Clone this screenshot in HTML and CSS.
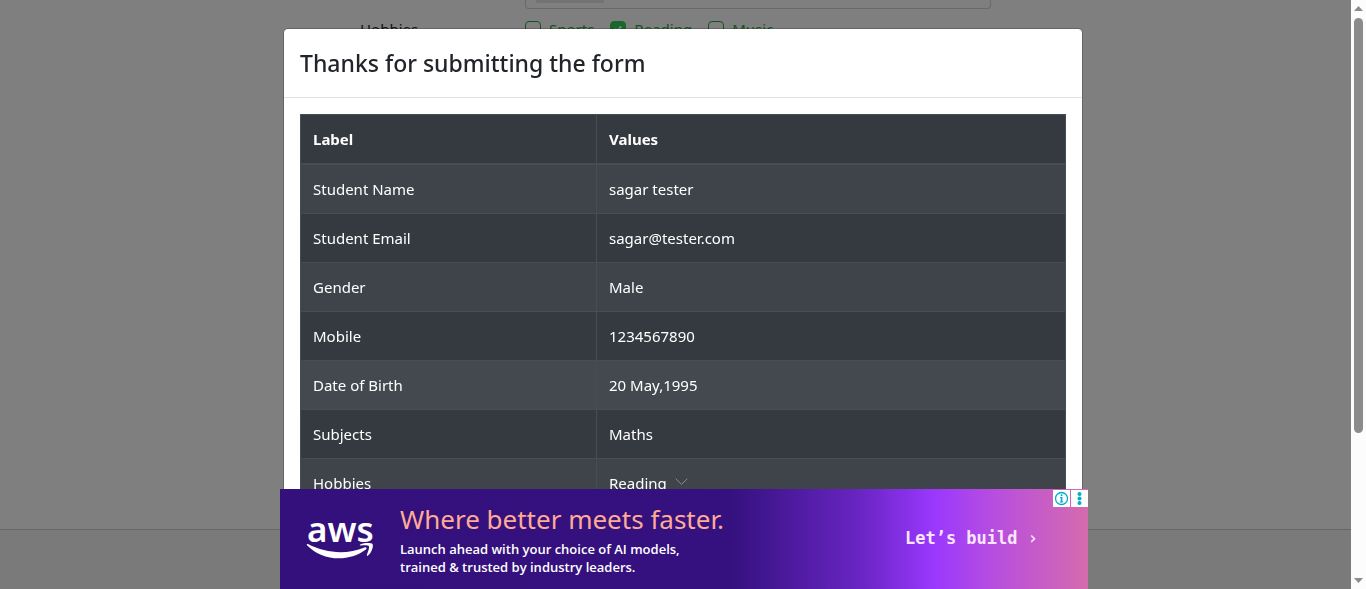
FILE: index.html
```html
<!DOCTYPE html>
<html lang="en">
<head>
<meta charset="utf-8">
<title>Practice Form</title>
<link rel="stylesheet" href="styles.css">
</head>
<body>
<div class="viewport">
  <div class="page">
    <main class="content">
      <form class="form">
        <div class="subjects"><span class="subject-tag"></span></div>
        <div class="hobbies">
          <span class="hobbies-label">Hobbies</span>
          <div class="options">
            <label class="option"><input type="checkbox"><span>Sports</span></label>
            <label class="option"><input type="checkbox" checked><span>Reading</span></label>
            <label class="option"><input type="checkbox"><span>Music</span></label>
          </div>
        </div>
      </form>
    </main>
    <footer class="footer"></footer>
  </div>
  <div class="scrollbar">
    <svg width="9" height="5" viewBox="0 0 9 5"><path d="M0 5 4.5 0 9 5z"/></svg>
    <div class="track"><div class="thumb"></div></div>
    <svg width="9" height="5" viewBox="0 0 9 5"><path d="M0 0h9L4.500 5z"/></svg>
  </div>
</div>

<div class="backdrop"></div>

<div class="overlay">
  <section class="modal" role="dialog" aria-labelledby="modal-title">
    <header class="modal-header"><h1 class="modal-title" id="modal-title">Thanks for submitting the form</h1></header>
    <div class="modal-body">
      <table class="results">
        <thead><tr><th scope="col">Label</th><th scope="col">Values</th></tr></thead>
        <tbody>
          <tr><td>Student Name</td><td>sagar tester</td></tr>
          <tr><td>Student Email</td><td>sagar@tester.com</td></tr>
          <tr><td>Gender</td><td>Male</td></tr>
          <tr><td>Mobile</td><td>1234567890</td></tr>
          <tr class="hovered"><td>Date of Birth</td><td>20 May,1995</td></tr>
          <tr><td>Subjects</td><td>Maths</td></tr>
          <tr><td>Hobbies</td><td>Reading</td></tr>
        </tbody>
      </table>
    </div>
  </section>
</div>

<aside class="ad-bar">
  <div class="ad">
    <button class="collapse" type="button" aria-label="Collapse">
      <svg width="13" height="8" viewBox="0 0 13 8"><path d="M.7.7 6.500 6.300 12.300.7" fill="none" stroke="#8a8d90"/></svg>
    </button>
    <div class="logo">
      <span class="logo-name">aws</span>
      <svg class="smile" width="68" height="17" viewBox="0 0 68 17">
        <path d="M1 2.200C.2 1.600.9.500 2 1.100c18.500 9.600 39 10.700 56.500 3.300 1.700-.7 2.900 1 1.400 2.100C52 12.500 42 15.300 33 15.300 20.500 15.300 9.500 10.700 1 2.200z"/>
        <path d="M54.500 2.600c-.8.1-.9-.6-.2-1C58-.7 65-.3 66.300.8c1.400 1.200.3 8.100-4.200 11.600-.8.600-1.500.3-1.200-.6 1-2.600 2.800-7.400 2-8.600-1-1.400-5.800-.9-8.400-.6z"/>
      </svg>
    </div>
    <div class="copy">
      <div class="headline">Where better meets faster.</div>
      <p class="tagline">Launch ahead with your choice of AI models,<br>trained &amp; trusted by industry leaders.</p>
    </div>
    <a class="cta" href="#">Let’s build ›</a>
    <div class="ad-tools">
      <button type="button" aria-label="Ad information"><svg width="15" height="15" viewBox="0 0 15 15"><circle cx="7.500" cy="7.500" r="6" fill="none" stroke="#00aecd" stroke-width="1.300"/><path d="M6.700 3.300h1.700V5H6.700zM6 6h2.400v4.500h.8v1H5.900v-1h.8V7H6z" fill="#00aecd"/></svg></button>
      <button type="button" aria-label="Ad options"><svg width="15" height="15" viewBox="0 0 15 15" fill="#00aecd"><circle cx="7.500" cy="3" r="2"/><circle cx="7.500" cy="7.500" r="2"/><circle cx="7.500" cy="12" r="2"/></svg></button>
    </div>
  </div>
</aside>
</body>
</html>
```
FILE: styles.css
```css
* { box-sizing: border-box; }

body {
  margin: 0;
  font: 15px/24px "Noto Sans", "Open Sans", sans-serif;
  color: #212529;
  overflow: hidden;
}

button { border: 0; padding: 0; background: none; display: flex; }

.viewport { display: flex; height: 100vh; }
.page { flex: 1; display: flex; flex-direction: column; background: #fff; }
.content { flex: 1; }
.form { width: 631px; margin: 0 auto; }

.subjects {
  height: 9px;
  margin-left: 165px;
  padding-left: 10px;
  border: 1px solid #ced4da;
  border-top: 0;
  border-radius: 0 0 4px 4px;
}
.subject-tag { display: block; width: 68px; height: 3px; background: #e6e6e6; border-radius: 0 0 2px 2px; }

.hobbies { display: flex; padding-top: 8px; }
.hobbies-label { width: 165px; }
.options { display: flex; gap: 16px; color: #28a745; }
.option { display: flex; align-items: center; gap: 8px; }
.option input {
  appearance: none;
  width: 16px;
  height: 16px;
  margin: 0;
  border: 1px solid #28a745;
  border-radius: 4px;
}
.option input:checked {
  border-color: #34ce57;
  background: #34ce57 url("data:image/svg+xml,%3Csvg xmlns='http://www.w3.org/2000/svg' viewBox='0 0 8 8'%3E%3Cpath fill='%23fff' d='M6.564.75l-3.590 3.612-1.538-1.550L0 4.260l2.974 2.990L8 2.193z'/%3E%3C/svg%3E") center / 8px 8px no-repeat;
}

.footer { height: 60px; background: #f5f5f5; border-top: 1px solid #ccc; }

.scrollbar {
  position: relative;
  z-index: 2;
  width: 15px;
  padding: 6px 3px;
  display: flex;
  flex-direction: column;
  align-items: center;
  gap: 7px;
  background: #fcfcfc;
  fill: #8b8b8b;
}
.track { flex: 1; width: 9px; }
.thumb { height: 75%; border-radius: 5px; background: #8b8b8b; }

.backdrop { position: fixed; inset: 0; z-index: 1; background: rgba(0, 0, 0, .5); }

.overlay { position: fixed; inset: 0 0 auto; z-index: 3; max-height: 100vh; overflow: hidden; pointer-events: none; }
.modal {
  width: 800px;
  max-width: 100%;
  margin: 28px auto;
  background: #fff;
  background-clip: padding-box;
  border: 1px solid rgba(0, 0, 0, .2);
  border-radius: 5px;
}
.modal-header { padding: 16px; border-bottom: 1px solid #dee2e6; }
.modal-title { margin: 0; font-size: 23px; line-height: 36px; font-weight: 500; }
.modal-body { padding: 16px; }

.results { width: 100%; border-collapse: collapse; table-layout: fixed; background: #343a40; color: #fff; }
.results th, .results td { height: 49px; padding: 12px; border: 1px solid #454d55; text-align: left; }
.results th { border-bottom-width: 2px; font-weight: 700; }
.results th:first-child { width: 296px; }
.results tbody tr:nth-child(odd) { background: #3e444a; }
.results .hovered, .results tbody .hovered:nth-child(odd) { background: #43494e; }

.ad-bar { position: fixed; inset: auto 0 0; z-index: 4; display: flex; justify-content: center; padding-left: 2px; }
.ad {
  position: relative;
  width: 808px;
  height: 100px;
  padding: 0 50px 0 26px;
  display: flex;
  align-items: center;
  color: #fff;
  background: linear-gradient(90deg, #33107c 0, #35117f 56%, #6a25c4 72%, #9a38fe 81%, #b64de0 88%, #d66bae 100%);
}
.collapse { position: absolute; top: -11px; left: 395px; }
.logo { width: 94px; padding-bottom: 3px; display: flex; flex-direction: column; }
.logo-name { padding-left: 1px; font-size: 35px; line-height: 28px; font-weight: 600; }
.copy { flex: 1; }
.headline { font-size: 26px; line-height: 32px; color: #ffab96; }
.tagline { margin: 5px 0 0; font: 600 13px/18px "Open Sans", sans-serif; }
.smile { fill: #fff; }
.cta { padding-bottom: 2px; color: #fbe6ff; text-decoration: none; font: 700 17px/24px "DejaVu Sans Mono", monospace; }
.ad-tools { position: absolute; top: 1px; right: 0; display: flex; gap: 1px; }
.ad-tools button { padding: 1px; background: #fff; }
```
